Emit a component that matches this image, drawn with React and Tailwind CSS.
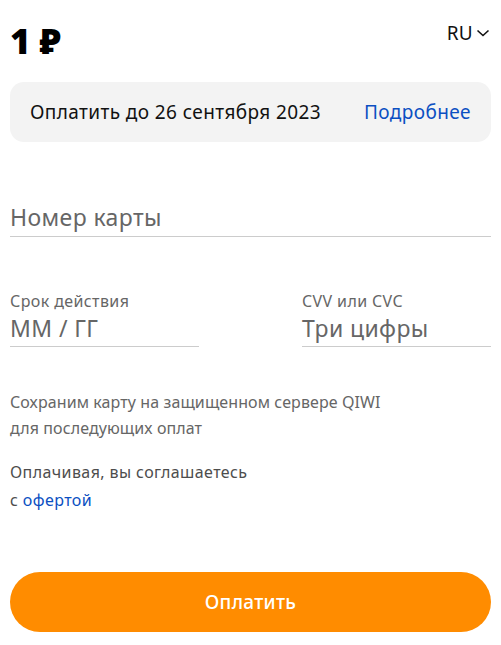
import React from "react";

export default function App() {
  return (
    <div className="w-[501px] h-[645px] bg-white px-[10px] text-[#000]" style={{ fontFamily: '"Noto Sans", "Open Sans", sans-serif' }}>
      <div className="flex justify-between items-start pt-[21px] h-[82px]">
        <div className="text-[35px] leading-[40px] font-black">1 ₽</div>
        <div className="flex items-center gap-[2px] text-[19px] leading-[26px] -mt-[1px] text-[#111]">
          <span className="tracking-[0.3px]">RU</span>
          <svg width="16" height="16" viewBox="0 0 16 16" fill="none" stroke="#111" strokeWidth="1.6">
            <path d="M2.5 5.5 L8 10.5 L13.5 5.5" />
          </svg>
        </div>
      </div>
      <div className="h-[60px] rounded-[14px] bg-[#f3f3f3] flex items-center justify-between px-[20px] text-[19px] tracking-[0.4px]">
        <span className="text-[#111]">Оплатить до 26 сентября 2023</span>
        <span className="text-[#0b4fc2]">Подробнее</span>
      </div>
      <div className="mt-[58px] border-b border-[#cccccc] pb-[2px]">
        <div className="text-[23px] leading-[34px] tracking-[0.4px] text-[#666]">Номер карты</div>
      </div>
      <div className="mt-[52px] flex justify-between">
        <div className="w-[189px] border-b border-[#cccccc] pb-[3px]">
          <div className="text-[16px] leading-[24px] tracking-[0.4px] text-[#666]">Срок действия</div>
          <div className="text-[23px] leading-[30px] tracking-[0.4px] text-[#666]">ММ / ГГ</div>
        </div>
        <div className="w-[189px] border-b border-[#cccccc] pb-[3px]">
          <div className="text-[16px] leading-[24px] tracking-[0.4px] text-[#666]">CVV или CVC</div>
          <div className="text-[23px] leading-[30px] tracking-[0.4px] text-[#666]">Три цифры</div>
        </div>
      </div>
      <div className="mt-[42px] text-[16px] leading-[26px] tracking-[0.1px] text-[#666]">
        Сохраним карту на защищенном сервере QIWI<br />для последующих оплат
      </div>
      <div className="mt-[17px] text-[16px] leading-[28px] tracking-[0.4px] text-[#4d4d4d]">
        Оплачивая, вы соглашаетесь<br />с <span className="text-[#0b4fc2]">офертой</span>
      </div>
      <button className="mt-[58px] w-full h-[60px] rounded-full bg-[#ff8c00] text-white text-[19px] tracking-[0.3px] font-medium">
        Оплатить
      </button>
    </div>
  );
}
